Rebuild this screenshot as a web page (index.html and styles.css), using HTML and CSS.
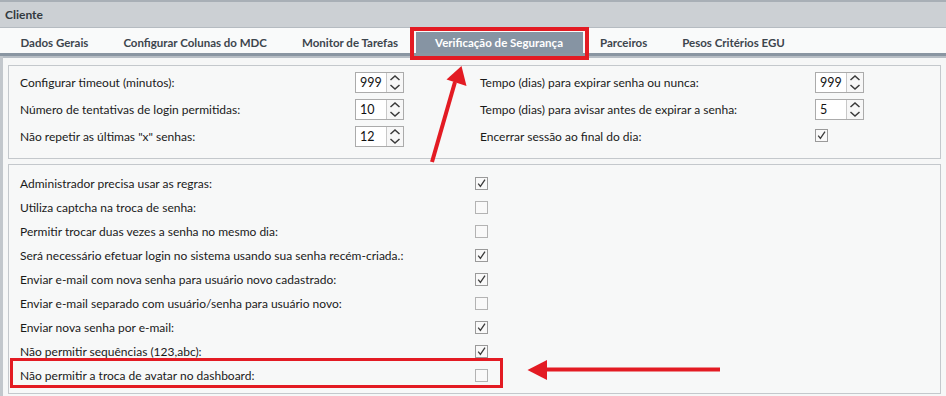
FILE: index.html
```html
<!DOCTYPE html>
<html lang="pt-BR">
<head>
    <meta charset="UTF-8">
    <title>Cliente - Verificação de Segurança</title>
    <link rel="stylesheet" href="styles.css">
</head>
<body>
    <div class="window">
        <div class="titlebar">Cliente</div>
        <div class="tabs">
            <div class="tab">Dados Gerais</div>
            <div class="tab">Configurar Colunas do MDC</div>
            <div class="tab">Monitor de Tarefas</div>
            <div class="tab active">Verificação de Segurança</div>
            <div class="tab">Parceiros</div>
            <div class="tab">Pesos Critérios EGU</div>
        </div>
        <div class="content">
            <div class="panel params">
                <span class="label">Configurar timeout (minutos):</span>
                <div class="spin"><span class="val">999</span><span class="arrows"><svg width="16" height="19" viewBox="0 0 16 19"><polyline points="3.5,7 8,3 12.5,7"/><polyline points="3.5,12 8,16 12.5,12"/></svg></span></div>
                <span class="label">Tempo (dias) para expirar senha ou nunca:</span>
                <div class="spin"><span class="val">999</span><span class="arrows"><svg width="16" height="19" viewBox="0 0 16 19"><polyline points="3.5,7 8,3 12.5,7"/><polyline points="3.5,12 8,16 12.5,12"/></svg></span></div>

                <span class="label">Número de tentativas de login permitidas:</span>
                <div class="spin"><span class="val">10</span><span class="arrows"><svg width="16" height="19" viewBox="0 0 16 19"><polyline points="3.5,7 8,3 12.5,7"/><polyline points="3.5,12 8,16 12.5,12"/></svg></span></div>
                <span class="label">Tempo (dias) para avisar antes de expirar a senha:</span>
                <div class="spin"><span class="val">5</span><span class="arrows"><svg width="16" height="19" viewBox="0 0 16 19"><polyline points="3.5,7 8,3 12.5,7"/><polyline points="3.5,12 8,16 12.5,12"/></svg></span></div>

                <span class="label">Não repetir as últimas "x" senhas:</span>
                <div class="spin"><span class="val">12</span><span class="arrows"><svg width="16" height="19" viewBox="0 0 16 19"><polyline points="3.5,7 8,3 12.5,7"/><polyline points="3.5,12 8,16 12.5,12"/></svg></span></div>
                <span class="label">Encerrar sessão ao final do dia:</span>
                <div><span class="check on"><svg width="11" height="11" viewBox="0 0 11 11"><polyline points="2.2,5.6 4.4,8.4 9,1.6"/></svg></span></div>
            </div>

            <div class="panel rules">
                <div class="row"><span class="label">Administrador precisa usar as regras:</span><span class="check on"><svg width="11" height="11" viewBox="0 0 11 11"><polyline points="2.2,5.6 4.4,8.4 9,1.6"/></svg></span></div>
                <div class="row"><span class="label">Utiliza captcha na troca de senha:</span><span class="check"></span></div>
                <div class="row"><span class="label">Permitir trocar duas vezes a senha no mesmo dia:</span><span class="check"></span></div>
                <div class="row"><span class="label">Será necessário efetuar login no sistema usando sua senha recém-criada.:</span><span class="check on"><svg width="11" height="11" viewBox="0 0 11 11"><polyline points="2.2,5.6 4.4,8.4 9,1.6"/></svg></span></div>
                <div class="row"><span class="label">Enviar e-mail com nova senha para usuário novo cadastrado:</span><span class="check on"><svg width="11" height="11" viewBox="0 0 11 11"><polyline points="2.2,5.6 4.4,8.4 9,1.6"/></svg></span></div>
                <div class="row"><span class="label">Enviar e-mail separado com usuário/senha para usuário novo:</span><span class="check"></span></div>
                <div class="row"><span class="label">Enviar nova senha por e-mail:</span><span class="check on"><svg width="11" height="11" viewBox="0 0 11 11"><polyline points="2.2,5.6 4.4,8.4 9,1.6"/></svg></span></div>
                <div class="row"><span class="label">Não permitir sequências (123,abc):</span><span class="check on"><svg width="11" height="11" viewBox="0 0 11 11"><polyline points="2.2,5.6 4.4,8.4 9,1.6"/></svg></span></div>
                <div class="row"><span class="label">Não permitir a troca de avatar no dashboard:</span><span class="check"></span></div>
            </div>
        </div>

        <!-- marcações em vermelho por cima da tela -->
        <svg class="annotations" width="946" height="396" viewBox="0 0 946 396">
            <rect x="412" y="29" width="175" height="29" />
            <rect x="11.5" y="359.5" width="490" height="27" class="thin" />
            <line x1="720" y1="369.5" x2="544" y2="369.5" />
            <polygon points="527.5,370 547,360 547,380" />
            <line x1="432" y1="162" x2="455" y2="82" />
            <polygon points="461.5,66 446.5,79.5 466.5,86" />
        </svg>
    </div>
</body>
</html>
```

FILE: styles.css
```css
body {
    margin: 0;
    font-family: Lato, "Noto Sans", sans-serif;
    font-size: 12px;
    color: #1a1a1a;
    background-color: #f6f7f7;
}
.window {
    position: relative;
    width: 946px;
    height: 396px;
    overflow: hidden;
}
.titlebar {
    height: 25px;
    line-height: 25px;
    padding-left: 5px;
    border-top: 2px solid #a8afb6;
    border-bottom: 1px solid #b5bbc1;
    background-color: #ccd0d4;
    font-size: 12px;
    font-weight: 700;
    color: #333a40;
}
.tabs {
    display: flex;
    height: 25px;
    padding-left: 3px;
    background-color: #f9fafa;
    border-bottom: 3px solid #8a96a2;
    box-shadow: 0 2px 0 #b7bec5;
}
.tab {
    display: flex;
    align-items: center;
    padding: 0 17.5px;
    margin-top: 3px;
    font-size: 11.5px;
    font-weight: 700;
    color: #3d454d;
}
.tab.active {
    padding: 0 19.5px;
    margin: 4px 0 0;
    background-color: #8694a3;
    color: #fff;
}
.content {
    padding: 9px 5px 0 5px;
    border-left: 3px solid #c2c7cc;
    height: 340px;
}
.panel {
    border: 1px solid #c4c8cc;
    background-color: #f7f8f8;
}
.params {
    display: grid;
    grid-template-columns: 335px 125px 335px 1fr;
    row-gap: 6px;
    align-items: center;
    padding: 6px 0 11px 11px;
}
.rules {
    margin-top: 5px;
    padding: 6px 0 6px 11px;
}
.row {
    display: flex;
    align-items: center;
    height: 24px;
}
.rules .label {
    width: 455px;
}
.spin {
    display: flex;
    width: 49px;
    height: 21px;
    box-sizing: border-box;
    border: 1px solid #ababab;
    background-color: #fff;
}
.spin .val {
    flex: 1;
    padding-left: 4px;
    line-height: 19px;
    font-size: 12.5px;
    color: #111;
}
.spin .arrows {
    width: 16px;
    border-left: 1px solid #c8c8c8;
    background-color: #f7f7f7;
}
.spin svg polyline {
    fill: none;
    stroke: #3a3a3a;
    stroke-width: 1.5;
}
.check {
    display: inline-flex;
    align-items: center;
    justify-content: center;
    width: 13px;
    height: 13px;
    box-sizing: border-box;
    border: 1px solid #b3b3b3;
    background-color: #f9f9f9;
}
.check.on {
    border-color: #9a9a9a;
}
.check svg polyline {
    fill: none;
    stroke: #3c3c3c;
    stroke-width: 1.3;
}
.annotations {
    position: absolute;
    left: 0;
    top: 0;
    pointer-events: none;
}
.annotations rect {
    fill: none;
    stroke: #e31b23;
    stroke-width: 4;
}
.annotations rect.thin {
    stroke-width: 3;
}
.annotations line {
    stroke: #e31b23;
    stroke-width: 4;
}
.annotations polygon {
    fill: #e31b23;
}
```
